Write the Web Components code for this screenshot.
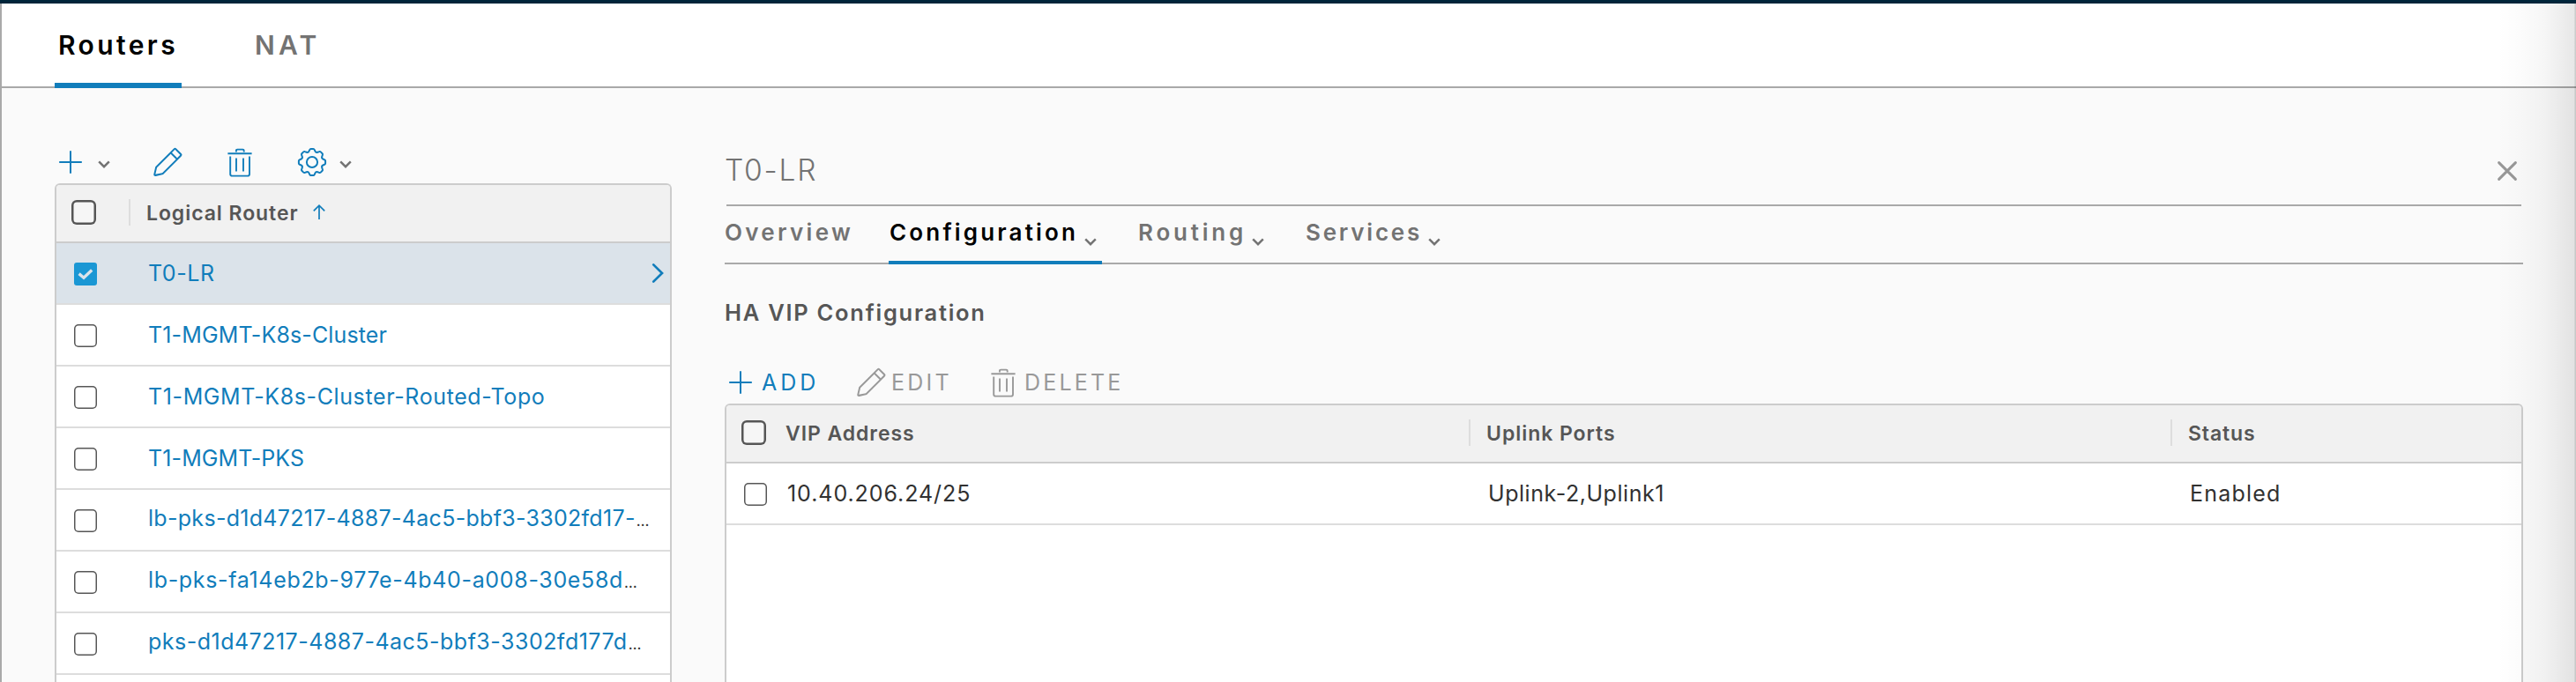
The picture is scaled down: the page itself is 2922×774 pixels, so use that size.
<!DOCTYPE html>
<html lang="en">
<head>
<meta charset="utf-8">
<title>Routers</title>
<style>
  html, body { margin: 0; height: 774px; overflow: hidden; background: #fafafa; }
  body { font-family: Inter, "Liberation Sans", sans-serif; color: #313131; }
</style>
</head>
<body>
<router-page></router-page>

<script>
const ICONS = {
  plus: '<path d="M18 5.2V30.8M5.2 18H30.8" stroke-width="2"/>',
  pencil: '<path fill="currentColor" stroke="none" d="M33.87,8.32,28,2.42a2.07,2.07,0,0,0-2.92,0L4.27,23.2l-1.9,8.2a2.06,2.06,0,0,0,2,2.5,2.14,2.14,0,0,0,.43,0L13.09,32,33.87,11.24A2.07,2.07,0,0,0,33.87,8.32ZM12.09,30.2,4.32,31.83l1.77-7.62L21.66,8.7l6,6ZM29,13.25l-6-6,3.48-3.46,5.9,6Z"/>',
  trash: '<path stroke-width="1.9" d="M4.4 8.3H31.6M13.9 6.4V4.9Q13.9 3.6 15.2 3.6H21.4Q22.7 3.6 22.7 4.9V6.4M7.2 11.6V31.4Q7.2 33.6 9.4 33.6H26.8Q29 33.6 29 31.4V11.6M14 13.4V28.4M22 13.4V28.4"/>',
  chevron: '<path d="M12.2 15.4L18 21.2L23.8 15.4" stroke-width="2.5"/>',
  caret: '<path d="M13.2 8.4L23 18L13.2 27.6" stroke-width="2.7" stroke-linecap="round"/>',
  close: '<path d="M8.6 8.6L27.4 27.4M27.4 8.6L8.6 27.4" stroke-width="3" stroke-linecap="round"/>',
  arrow: '<path d="M18 10.4V26M11.8 16.4L18 10.2L24.2 16.4" stroke-width="1.7"/>'
};

/* The gear outline: eight rounded teeth joined by shallow concave valleys. */
function gearPath() {
  const at = (k, t, r) => {
    const a = k * Math.PI / 4;
    return (18 + t * Math.cos(a) + r * Math.sin(a)).toFixed(2) + ' ' +
           (18 + t * Math.sin(a) - r * Math.cos(a)).toFixed(2);
  };
  let d = 'M' + at(0, -3.5, 12.4);
  for (let k = 0; k < 8; k++) {
    d += 'L' + at(k, -2.7, 14.1) + 'Q' + at(k, -2.3, 15.1) + ' ' + at(k, -1.3, 15.1) +
         'L' + at(k, 1.3, 15.1) + 'Q' + at(k, 2.3, 15.1) + ' ' + at(k, 2.7, 14.1) +
         'L' + at(k, 3.5, 12.4) + 'Q' + at(k + .5, 0, 11.4) + ' ' + at(k + 1, -3.5, 12.4);
  }
  return d + 'Z';
}
ICONS.gear = '<g stroke-width="2" stroke-linejoin="round"><path d="' + gearPath() + '"/><circle cx="18" cy="18" r="6.1"/></g>';

function define(name, html) {
  const template = document.createElement('template');
  template.innerHTML = html;
  customElements.define(name, class extends HTMLElement {
    constructor() {
      super();
      this.attachShadow({ mode: 'open' }).append(template.content.cloneNode(true));
    }
  });
}

customElements.define('app-icon', class extends HTMLElement {
  connectedCallback() {
    if (this.shadowRoot) return;
    this.attachShadow({ mode: 'open' }).innerHTML =
      '<style>:host{display:block;flex:none;width:36px;height:36px}svg{display:block}</style>' +
      '<svg width="36" height="36" viewBox="0 0 36 36" fill="none" stroke="currentColor">' +
      ICONS[this.getAttribute('name')] + '</svg>';
  }
});

define('check-box', `
  <style>
    :host { display: block; box-sizing: border-box; flex: none; width: 26px; height: 26px;
            box-shadow: inset 0 0 0 1.5px #565656; border-radius: 5px; background: #fff; }
    :host([head]) { width: 28px; height: 28px; box-shadow: inset 0 0 0 2.5px #565656; border-radius: 6px; background: #f6f6f6; }
    :host([checked]) { box-shadow: none; border-radius: 3px; background: #1a97d4; }
    svg { display: none; }
    :host([checked]) svg { display: block; }
  </style>
  <svg width="26" height="26" viewBox="0 0 26 26" fill="none" stroke="#dbe3ea" stroke-width="3.4"><path d="M5.6 12.6L11 17.2L20.2 8.4"/></svg>`);

define('main-tab', `
  <style>
    :host { display: flex; box-sizing: border-box; height: 96px; line-height: 94px; padding-left: 4px;
            width: 144px; font-size: 30px; font-weight: 600; color: #737373; white-space: nowrap;
            letter-spacing: var(--ls); }
    :host([active]) { color: #000; box-shadow: inset 0 -6px #117dbb; }
  </style><slot></slot>`);

define('sub-tab', `
  <style>
    :host { display: flex; justify-content: space-between; box-sizing: border-box; height: 66px;
            line-height: 60px; font-size: 26px; font-weight: 600; color: #737373;
            letter-spacing: var(--ls); white-space: nowrap; }
    :host([active]) { box-shadow: inset 0 -4px #117dbb; }
    :host([active]) span { color: #000; }
    :host(:not([plain])) span { padding-left: 1px; }
    app-icon { margin: 21.5px -4.5px 0 -16px; }
    :host([plain]) app-icon { display: none; }
  </style><span><slot></slot></span><app-icon name="chevron"></app-icon>`);

define('tool-button', `
  <style>
    :host { display: flex; align-items: center; height: 36px; font-size: 25px; line-height: 37px;
            letter-spacing: var(--ls); color: #117dbb; white-space: nowrap; }
    :host([disabled]) { color: #999; }
  </style><slot></slot>`);

define('data-grid', `
  <style>
    :host { display: block; box-sizing: border-box; border: 2px solid #ccc; border-bottom: 0;
            border-radius: 6px 6px 0 0; background: #fff; overflow: hidden; }
  </style><slot></slot>`);

define('grid-head', `
  <style>
    :host { display: grid; grid-template-columns: var(--cols); box-sizing: border-box; height: 66px;
            border-bottom: 2px solid #ccc; background: #f1f1f1; align-items: center;
            font-size: 23px; font-weight: 600; color: #565656; }
    ::slotted(check-box) { margin: -3px 0 0 17px; }
  </style><slot></slot>`);

define('head-cell', `
  <style>
    :host { display: flex; align-items: center; height: 30px; line-height: 30px; box-sizing: border-box;
            padding-left: 18px; border-left: 2px solid #ddd; letter-spacing: var(--ls); white-space: nowrap; margin-top: -2px; }
    :host([first]) { border-color: transparent; }
    span { padding-top: 2px; }
  </style><span><slot></slot></span><slot name="icon"></slot>`);

define('grid-row', `
  <style>
    :host { display: grid; grid-template-columns: var(--cols); box-sizing: border-box; height: 70px;
            border-bottom: 2px solid #ddd; align-items: center; font-size: 25px; color: #313131; }
    :host([selected]) { background: #dbe3ea; }
    ::slotted(check-box) { margin: 1px 0 0 20px; }
  </style><slot></slot>`);

define('row-cell', `
  <style>
    :host { display: flex; justify-content: space-between; align-items: center; line-height: 66px; height: 66px;
            padding-left: 22px; white-space: nowrap; letter-spacing: var(--ls); margin-top: -1px; }
  </style><slot></slot>`);

define('router-link', `
  <style>
    :host { display: block; color: #117dbb; }
    i { display: none; font-style: normal; color: #313131; font-size: 17px; letter-spacing: 0; padding-left: 1px; }
    :host([cut]) i { display: inline; }
  </style><slot></slot><i>…</i>`);

define('panel-title', `
  <style>
    :host { display: flex; justify-content: space-between; align-items: center; box-sizing: border-box;
            height: 80px; margin: 0 2px; border-bottom: 2px solid #a9a9a9; color: #737373;
            font-size: 33.5px; font-weight: 300; letter-spacing: 1.8px; }
    span { margin-left: -2px; }
    app-icon { color: #979797; margin: 2px -2px 0 0; }
  </style><span><slot></slot></span><app-icon name="close"></app-icon>`);

define('router-list', `
  <style>
    :host { display: flex; flex-direction: column; width: 700px; --cols: 82px 1fr; }
    .tools { display: flex; height: 108px; box-sizing: border-box; padding: 66px 0 0; }
    .tools app-icon { color: #117dbb; }
    .tools app-icon[name=chevron] { color: #737373; margin: 2px 0 0 2.3px; }
    .tools .pencil { margin-left: 35.7px; }
    .tools .trash { margin-left: 46px; }
    .tools .gear { margin-left: 46px; }
    data-grid { height: 566px; }
    head-cell app-icon { color: #117dbb; margin: 0 0 0 5.5px; }
    grid-row app-icon { color: #117dbb; margin-right: -3.5px; }
  </style>
  <div class="tools">
    <app-icon name="plus"></app-icon><app-icon name="chevron"></app-icon>
    <app-icon class="pencil" name="pencil"></app-icon>
    <app-icon class="trash" name="trash"></app-icon>
    <app-icon class="gear" name="gear"></app-icon><app-icon name="chevron"></app-icon>
  </div>
  <data-grid>
    <grid-head><check-box head></check-box><head-cell style="--ls:.93px">Logical Router<app-icon slot="icon" name="arrow"></app-icon></head-cell></grid-head>
    <grid-row selected><check-box checked></check-box><row-cell style="--ls:.57px"><router-link>T0-LR</router-link><app-icon name="caret"></app-icon></row-cell></grid-row>
    <grid-row><check-box></check-box><row-cell style="--ls:.13px"><router-link>T1-MGMT-K8s-Cluster</router-link></row-cell></grid-row>
    <grid-row><check-box></check-box><row-cell style="--ls:.61px"><router-link>T1-MGMT-K8s-Cluster-Routed-Topo</router-link></row-cell></grid-row>
    <grid-row><check-box></check-box><row-cell style="--ls:.11px"><router-link>T1-MGMT-PKS</router-link></row-cell></grid-row>
    <grid-row><check-box></check-box><row-cell style="--ls:.3px"><router-link cut>lb-pks-d1d47217-4887-4ac5-bbf3-3302fd17-</router-link></row-cell></grid-row>
    <grid-row><check-box></check-box><row-cell style="--ls:.67px"><router-link cut>lb-pks-fa14eb2b-977e-4b40-a008-30e58d</router-link></row-cell></grid-row>
    <grid-row><check-box></check-box><row-cell style="--ls:.49px"><router-link cut>pks-d1d47217-4887-4ac5-bbf3-3302fd177d</router-link></row-cell></grid-row>
    <grid-row></grid-row>
  </data-grid>`);

define('router-detail', `
  <style>
    :host { display: flex; flex-direction: column; width: 2040px; padding-top: 54px; --cols: 48px 794px 796px 1fr; }
    nav { display: flex; gap: 40px; height: 66px; box-sizing: border-box; box-shadow: inset 0 -2px #a9a9a9; }
    h2 { margin: 0; height: 109px; line-height: 109px; font-size: 25.5px; font-weight: 600; color: #565656; letter-spacing: 1.73px; }
    .tools { display: grid; grid-template-columns: 148px 150px 1fr; height: 49px; box-sizing: border-box; padding-top: 7px; }
    data-grid { height: 316px; }
    grid-head head-cell:nth-child(2), grid-row row-cell:nth-child(2) { margin-left: -1px; }
  </style>
  <panel-title>T0-LR</panel-title>
  <nav>
    <sub-tab plain style="width:146px;--ls:3.3px">Overview</sub-tab>
    <sub-tab active style="width:242px;--ls:3.17px">Configuration</sub-tab>
    <sub-tab style="width:150px;--ls:3.79px">Routing</sub-tab>
    <sub-tab style="width:160px;--ls:2.77px">Services</sub-tab>
  </nav>
  <h2>HA VIP Configuration</h2>
  <div class="tools">
    <tool-button style="--ls:4px"><app-icon name="plus"></app-icon><span style="margin-left:6px">ADD</span></tool-button>
    <tool-button disabled style="--ls:3.24px"><app-icon name="pencil"></app-icon><span style="margin-left:5px">EDIT</span></tool-button>
    <tool-button disabled style="--ls:3.2px"><app-icon name="trash"></app-icon><span style="margin-left:6px">DELETE</span></tool-button>
  </div>
  <data-grid>
    <grid-head><check-box head></check-box><head-cell first style="--ls:.93px">VIP Address</head-cell><head-cell style="--ls:.96px">Uplink Ports</head-cell><head-cell style="--ls:.88px">Status</head-cell></grid-head>
    <grid-row><check-box></check-box><row-cell style="--ls:.93px">10.40.206.24/25</row-cell><row-cell style="--ls:.55px">Uplink-2,Uplink1</row-cell><row-cell style="--ls:1.2px">Enabled</row-cell></grid-row>
  </data-grid>`);

define('router-page', `
  <style>
    :host { display: block; position: relative; box-sizing: border-box; width: 2922px; height: 774px; overflow: hidden;
            border-top: 4px solid #00253a; background: #fafafa; }
    .frame { border-left: 2px solid #a9a9a9; height: 770px; }
    header { display: flex; gap: 79px; height: 96px; padding-left: 60px; background: #fff;
             box-shadow: inset 0 -2px #a9a9a9; }
    main { display: flex; gap: 60px; padding-left: 60px; }
    /* soft shade over the right edge, cast by the neighbouring panel */
    .shade { position: absolute; top: 0; right: 0; width: 90px; height: 770px;
             background: linear-gradient(90deg, rgba(0,0,0,0), rgba(0,0,0,.01) 28%, rgba(0,0,0,.035) 60%, rgba(0,0,0,.095) 97.5%, rgba(0,0,0,.2) 99%); }
  </style>
  <div class="frame">
    <header>
      <main-tab active style="--ls:3.4px">Routers</main-tab>
      <main-tab style="--ls:4.2px">NAT</main-tab>
    </header>
    <main>
      <router-list></router-list>
      <router-detail></router-detail>
    </main>
  </div>
  <div class="shade"></div>`);
</script>
</body>
</html>
